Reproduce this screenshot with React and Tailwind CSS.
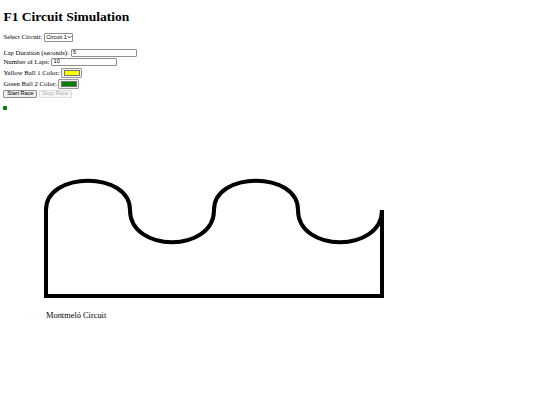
import React from "react";

const ctl = "whitespace-nowrap font-['Liberation_Sans',Arial,sans-serif] text-[5.6px] leading-none text-black";

function ColorBox({ color }) {
  return (
    <span className="inline-flex h-[10px] w-[21px] items-center justify-center rounded-[1px] border border-[#9a9a9a] bg-[#efefef]">
      <span className="h-[6px] w-[16px] border border-[#777]" style={{ background: color }} />
    </span>
  );
}

export default function App() {
  return (
    <div className="min-h-[405px] w-[540px] bg-white px-[3.4px] pt-[3.4px] font-['Liberation_Serif','Times_New_Roman',serif] text-[6.75px] leading-normal text-black">
      <h1 className="mt-[6px] text-[13.5px] font-bold leading-[15px]">F1 Circuit Simulation</h1>

      {/* circuit picker */}
      <div className="mt-[8.6px] flex h-[9px] items-center gap-[1.6px]">
        <label>Select Circuit:</label>
        <span className={`${ctl} flex h-[9px] w-[29px] items-center justify-between rounded-[1px] border border-[#8f8f8f] bg-white pl-[1.5px] pr-[1px]`}>
          Circuit 1
          <svg width="5" height="4" viewBox="0 0 10 8" className="shrink-0">
            <path d="M1 2 L5 6 L9 2" fill="none" stroke="#222" strokeWidth="1.6" />
          </svg>
        </span>
      </div>

      <div className="mt-[7px] flex h-[8px] items-center gap-[1.6px]">
        <label className="whitespace-nowrap">Lap Duration (seconds):</label>
        <span className={`${ctl} flex h-[8px] w-[66px] items-center rounded-[1px] border border-[#8f8f8f] bg-white pl-[1.5px]`}>5</span>
      </div>
      <div className="mt-[1px] flex h-[8px] items-center gap-[1.6px]">
        <label className="whitespace-nowrap">Number of Laps:</label>
        <span className={`${ctl} flex h-[8px] w-[66px] items-center rounded-[1px] border border-[#8f8f8f] bg-white pl-[1.5px]`}>10</span>
      </div>
      <div className="mt-[2px] flex h-[10px] items-center gap-[1.6px]">
        <label className="whitespace-nowrap">Yellow Ball 1 Color:</label>
        <ColorBox color="#ffff00" />
      </div>
      <div className="mt-[1px] flex h-[10px] items-center gap-[1.6px]">
        <label className="whitespace-nowrap">Green Ball 2 Color:</label>
        <ColorBox color="#008000" />
      </div>

      <div className="mt-[1px] flex h-[8px] items-center gap-[1.5px]">
        <button className={`${ctl} h-[8px] w-[34px] rounded-[1px] border border-[#8f8f8f] bg-[#efefef]`}>Start Race</button>
        <button disabled className={`${ctl} h-[8px] w-[33px] rounded-[1px] border border-[#dcdcdc] bg-[#f7f7f7] !text-[#b0b0b0]`}>Stop Race</button>
      </div>

      {/* ball */}
      <div className="mt-[8px] h-[4px] w-[4px] rounded-[1px] bg-[#008000]" />

      {/* canvas */}
      <svg width="536" height="291" className="-ml-[3.4px] block" viewBox="0 0 536 291">
        <path
          d="M46 186 L46 100 C46 61 130 61 130 100 C130 143 214 143 214 100 C214 61 298 61 298 100 C298 143 382 143 382 100 L382 186 Z"
          fill="none"
          stroke="#000"
          strokeWidth="4"
        />
        <text x="46" y="208" fontFamily="Liberation Serif, Times New Roman, serif" fontSize="8.4" fill="#000">
          Montmeló Circuit
        </text>
      </svg>
    </div>
  );
}
